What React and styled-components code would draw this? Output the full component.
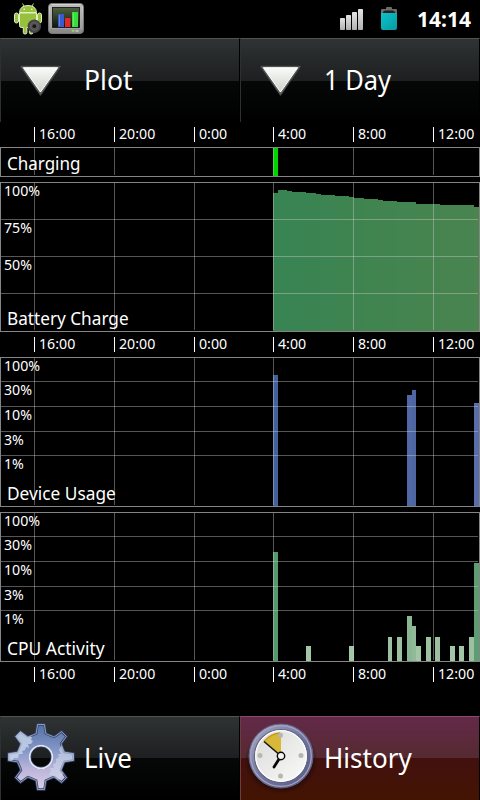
import React from 'react';
import styled, { createGlobalStyle, css } from 'styled-components';

const GlobalStyle = createGlobalStyle`
  body { margin: 0; background: #000; }
  * { box-sizing: border-box; }
`;

const Screen = styled.main`
  width: 480px;
  height: 800px;
  display: flex;
  flex-direction: column;
  overflow: hidden;
  background: #000;
  color: #fff;
  font-family: 'Noto Sans', 'Open Sans', sans-serif;
`;

const StatusBar = styled.header`
  height: 38px;
  flex: none;
  display: flex;
  align-items: flex-start;
  justify-content: space-between;
`;

const StatusGroup = styled.div`
  display: flex;
  height: 38px;
`;

const Clock = styled.span`
  width: 63px;
  padding-top: 5px;
  margin-left: 17px;
  font-size: 21px;
  font-weight: 700;
  line-height: 29px;
`;

const ButtonRow = styled.nav`
  display: grid;
  grid-template-columns: 240px 240px;
  height: 84px;
  flex: none;
`;

const plain = css`
  border-top: 1px solid #505354;
  border-left: 1px solid #2d2f30;
  background: linear-gradient(#2f3334 0, #1d1f20 50%, #060707 50%, #000 100%);
`;

const highlighted = css`
  border-top: 1px solid #8a4a68;
  border-left: 1px solid #74393f;
  background: linear-gradient(#632949 0, #552a30 50%, #42110f 50%, #431402 100%);
`;

const BarButton = styled.button`
  ${(p) => (p.$active ? highlighted : plain)}
  border-right: 1px solid #000;
  border-bottom: 0;
  border-radius: 0;
  padding: 0;
  display: flex;
  align-items: center;
  color: #fff;
  font: 400 27.5px/38px 'Noto Sans', 'Open Sans', sans-serif;
  text-align: left;
`;

const IconSlot = styled.span`
  width: 81px;
  height: 83px;
  flex: none;
  svg { display: block; }
`;

const ButtonText = styled.span`
  display: block;
  padding: 0 0 2px 2px;
  transform: scaleX(${(p) => p.$stretch || 1});
  transform-origin: 2px 50%;
`;

const Axis = styled.div`
  height: ${(p) => p.$height}px;
  flex: none;
  display: flex;
  padding: 5px 0 0 34px;
`;

const Tick = styled.span`
  width: ${(p) => p.$width}px;
  flex: none;
  height: 15px;
  border-left: 1px solid #fff;
  padding-left: 4px;
  font-size: 14.2px;
  line-height: 14px;
  white-space: nowrap;
`;

const Panel = styled.section`
  position: relative;
  width: 480px;
  height: ${(p) => p.$height}px;
  margin-bottom: ${(p) => p.$gap || 0}px;
  flex: none;
  svg { display: block; }
`;

const Scale = styled.span`
  position: absolute;
  left: 4px;
  top: ${(p) => p.$line}px;
  font-size: 14.2px;
  line-height: 18px;
`;

const Title = styled.h2`
  position: absolute;
  left: 7px;
  bottom: 2px;
  margin: 0;
  font-size: 18px;
  font-weight: 400;
  line-height: 24px;
  white-space: nowrap;
  transform: scaleX(${(p) => p.$stretch || 1});
  transform-origin: 0 50%;
`;

const Footer = styled.div`
  margin-top: auto;
`;

const columns = [34, 114, 194, 273, 353, 433];
const hours = ['16:00', '20:00', '0:00', '4:00', '8:00', '12:00'];

const battery = [
  [273, 11], [278, 8], [287, 9], [292, 10], [306, 11], [316, 12], [321, 13],
  [335, 14], [349, 15], [354, 16], [364, 17], [378, 18], [383, 19], [397, 20],
  [416, 22], [440, 23], [474, 25],
].map(([x, y], i, all) => ({
  x,
  y,
  w: (all[i + 1] ? all[i + 1][0] : 479) - x,
  c: `rgb(${Math.round(55 + (x - 273) * 0.1)},${132},${Math.round(82 - (x - 273) * 0.02)})`,
}));

const device = [
  { x: 273, y: 18, w: 5, c: '#43609a' },
  { x: 407, y: 38, w: 5, c: '#5069a5' },
  { x: 412, y: 33, w: 4, c: '#4e67a3' },
  { x: 474, y: 46, w: 5, c: '#586daa' },
];

const cpu = [
  { x: 273, y: 40, w: 5, c: '#55986c' },
  { x: 306, y: 134, w: 5, c: '#a3c7a6' },
  { x: 349, y: 134, w: 5, c: '#a3c7a6' },
  { x: 388, y: 125, w: 4, c: '#9bc1a1' },
  { x: 397, y: 125, w: 5, c: '#9bc1a1' },
  { x: 407, y: 104, w: 5, c: '#8bb694' },
  { x: 412, y: 114, w: 4, c: '#91bb98' },
  { x: 416, y: 134, w: 5, c: '#a3c7a6' },
  { x: 426, y: 125, w: 5, c: '#9bc1a1' },
  { x: 435, y: 125, w: 5, c: '#9bc1a1' },
  { x: 450, y: 134, w: 5, c: '#a3c7a6' },
  { x: 459, y: 134, w: 5, c: '#a3c7a6' },
  { x: 469, y: 125, w: 5, c: '#9bc1a1' },
  { x: 474, y: 51, w: 5, c: '#5c9e72' },
];

function Chart({ title, stretch, height, gap, rows = [], labels = [], bars }) {
  return (
    <Panel $height={height} $gap={gap}>
      <svg width="480" height={height} shapeRendering="crispEdges">
        {bars.map((b) => (
          <rect key={b.x} x={b.x} y={b.y} width={b.w} height={height - 1 - b.y} fill={b.c} />
        ))}
        <g fill="#ccc" fillOpacity=".42">
          {columns.map((x) => <rect key={x} x={x} y="1" width="1" height={height - 3} />)}
          {rows.map((y) => <rect key={y} x="1" y={y} width="477" height="1" />)}
        </g>
        <rect x=".5" y=".5" width="479" height={height - 1} fill="none" stroke="#858585" />
      </svg>
      {labels.map((text, i) => (
        <Scale key={text} $line={i === 0 ? 0 : rows[i - 1]}>{text}</Scale>
      ))}
      <Title $stretch={stretch}>{title}</Title>
    </Panel>
  );
}

function TimeAxis({ height = 25 }) {
  return (
    <Axis $height={height}>
      {hours.map((h, i) => (
        <Tick key={h} $width={(columns[i + 1] || 480) - columns[i]}>{h}</Tick>
      ))}
    </Axis>
  );
}

function Droid() {
  return (
    <svg width="96" height="38" viewBox="0 0 96 38">
      <defs>
        <linearGradient id="frame" x2="0" y2="1"><stop stopColor="#d5d5d5" /><stop offset="1" stopColor="#858585" /></linearGradient>
        <linearGradient id="tube" x2="0" y2="1"><stop stopColor="#50613f" /><stop offset="1" stopColor="#0c160a" /></linearGradient>
      </defs>
      <g fill="#97c03d" stroke="#e1efc4" strokeWidth="1">
        <path d="M22.5 3.5l2 3.5M33.5 3.5l-2 3.5" stroke="#b9d77b" />
        <rect x="14.5" y="13" width="4" height="10" rx="2" />
        <rect x="37.5" y="13" width="4" height="10" rx="2" />
        <path d="M19.5 13h17v12.5q0 2-2 2h-1.500v5q0 1.500-1.800 1.500t-1.800-1.500v-5h-2.500v5q0 1.500-1.800 1.500t-1.800-1.500v-5h-2q-1.800 0-1.800-2z" />
        <path d="M19.500 12.500q.5-7 8.500-7t8.500 7z" />
      </g>
      <circle cx="24.200" cy="9.300" r=".8" fill="#fff" /><circle cx="31.800" cy="9.300" r=".8" fill="#fff" />
      <circle cx="34.300" cy="26.200" r="6.700" fill="#454545" />
      <circle cx="34.300" cy="26.200" r="4.200" fill="#555" stroke="#666" strokeWidth=".7" />
      <circle cx="34.300" cy="26.200" r="1.900" fill="#161616" />
      <rect x="48.500" y="3.500" width="35" height="30" rx="3.500" fill="url(#frame)" stroke="#777" />
      <path d="M50 5h32v24H50z" fill="#aaa" opacity=".6" />
      <rect x="52.500" y="7.500" width="27" height="20" fill="url(#tube)" stroke="#222" />
      <rect x="58" y="14" width="6" height="13" fill="#365bd0" /><rect x="65" y="18" width="5.500" height="9" fill="#e02828" /><rect x="72" y="12" width="6" height="15" fill="#35df3b" />
      <path d="M59.500 15v11M73.500 13v13" stroke="#fff" strokeOpacity=".25" />
      <ellipse cx="73" cy="30.700" rx="1.500" ry="1" fill="#8fe53a" /><path d="M75.500 31h3" stroke="#e6e6e6" />
    </svg>
  );
}

function Signals() {
  return (
    <svg width="70" height="38" viewBox="0 0 70 38">
      <defs>
        <linearGradient id="sig" x2="0" y2="1"><stop stopColor="#e4e4e4" /><stop offset="1" stopColor="#b0b0b0" /></linearGradient>
        <linearGradient id="cell" x2="1" y2="1"><stop stopColor="#0cc4cc" /><stop offset="1" stopColor="#07999f" /></linearGradient>
      </defs>
      <g fill="url(#sig)">
        <rect x="10" y="18" width="5" height="12" rx=".8" /><rect x="16" y="15" width="5" height="15" rx=".8" />
        <rect x="22" y="12" width="5" height="18" rx=".8" /><rect x="28" y="9" width="5" height="21" rx=".8" />
      </g>
      <path d="M51 13V10q0-1 1-1h4V8q0-1 1-1h4q1 0 1 1v1h4q1 0 1 1v3z" fill="#6c6c6c" />
      <path d="M53 13v-1l2-1.500h8l2 1.500v1z" fill="#222" />
      <path d="M51 13h16v15q0 2-2 2H53q-2 0-2-2z" fill="url(#cell)" />
    </svg>
  );
}

function DownArrow({ id }) {
  return (
    <svg width="81" height="83" viewBox="1 39 81 83">
      <defs><linearGradient id={id} x2="0" y2="1"><stop stopColor="#fafbf9" /><stop offset="1" stopColor="#cfd2ca" /></linearGradient></defs>
      <path d="M21 66.500h39L40.500 95z" fill="#666" stroke="#555" strokeOpacity=".7" strokeWidth="1.500" strokeLinejoin="round" />
      <path d="M23.300 67.700h34.400L40.500 92z" fill={`url(#${id})`} stroke="#fff" strokeWidth="1" />
    </svg>
  );
}

function Gear() {
  const teeth = [0, 45, 90, 135, 180, 225, 270, 315];
  const rot = (x, y, a) => {
    const r = (a * Math.PI) / 180;
    return `${(x * Math.cos(r) - y * Math.sin(r)).toFixed(2)} ${(x * Math.sin(r) + y * Math.cos(r)).toFixed(2)}`;
  };
  const outline = teeth
    .map((a) => [[-7, -22.5], [-4.8, -23.5], [-3.400, -32.500], [3.400, -32.500], [4.800, -23.500], [7, -22.500]].map(([x, y]) => rot(x, y, a)).join('L'))
    .join('L');
  const d = `M${outline}Z M11 0A11 11 0 1 0 -11 0A11 11 0 1 0 11 0Z`;
  return (
    <svg width="81" height="83" viewBox="1 717 81 83">
      <defs>
        <linearGradient id="steel" x2="0" y2="1"><stop stopColor="#5272a6" /><stop offset=".45" stopColor="#8c9ccb" /><stop offset=".7" stopColor="#bdb6da" /><stop offset="1" stopColor="#ddcee5" /></linearGradient>
        <clipPath id="cog"><path d={d} clipRule="evenodd" /></clipPath>
      </defs>
      <g transform="translate(41 757)">
        <path d={d} fill="url(#steel)" fillRule="evenodd" stroke="#334269" strokeWidth="2.400" />
        <g clipPath="url(#cog)" fill="#cfd9eb" fillOpacity=".75">
          <path d="M-34-28h18l5 7 2 1-1 3 2 1-2 3h-3l1 4-3-1-1 3-3 1 1 3h-4l-1 4h-4l-2 3h-12z" />
          <path d="M20-11l4-2 3 6h10v16l-12 4-7 10-4-1-2-4h-4l2-4-1-3h4l-1-4 3-1v-4l3-2-1-3h3l-2-4z" fillOpacity=".6" />
        </g>
        <path d={d} fill="none" stroke="#b2c0dc" strokeWidth=".9" strokeOpacity=".8" />
        <circle r="11.500" fill="none" stroke="#e3e7f5" strokeWidth="1.600" />
      </g>
    </svg>
  );
}

function HistoryClock() {
  return (
    <svg width="81" height="83" viewBox="241 717 81 83">
      <defs>
        <linearGradient id="ring" x2="1" y2="1"><stop stopColor="#a9abc4" /><stop offset=".5" stopColor="#7275a0" /><stop offset="1" stopColor="#5a5b82" /></linearGradient>
        <linearGradient id="face" x2="1" y2="1"><stop stopColor="#d9d9d7" /><stop offset="1" stopColor="#fbfbfa" /></linearGradient>
        <radialGradient id="shade"><stop offset=".75" stopColor="#160508" stopOpacity=".7" /><stop offset="1" stopColor="#160508" stopOpacity="0" /></radialGradient>
      </defs>
      <ellipse cx="281" cy="761" rx="37" ry="33" fill="url(#shade)" />
      <circle cx="281" cy="756" r="32" fill="url(#ring)" stroke="#626484" strokeWidth="1" />
      <circle cx="281" cy="756" r="30.300" fill="none" stroke="#a3a6c4" strokeWidth="1.200" />
      <circle cx="281" cy="756" r="26.500" fill="url(#face)" stroke="#626283" strokeWidth="1.200" />
      <circle cx="281" cy="756" r="25.300" fill="none" stroke="#fff" strokeWidth="1.200" />
      <path d="M281 756L264 741.500Q271 733.500 281 733z" fill="#d7b838" />
      <path d="M264 741.500Q271 733.500 280 733" fill="none" stroke="#c09c16" strokeWidth="1.300" />
      <g fill="#b5b8b2"><circle cx="280.500" cy="735.300" r="2.500" /><circle cx="280.500" cy="776" r="2.500" /><circle cx="260" cy="755.500" r="2.500" /><circle cx="301" cy="755.500" r="2.500" /></g>
      <path d="M281 756L264 741.500" stroke="#111" strokeWidth="1.500" />
      <path d="M281 756L274 767" stroke="#050505" strokeWidth="2.800" strokeLinecap="round" />
      <circle cx="281" cy="756" r="3.700" fill="#f4f4f4" stroke="#050505" strokeWidth="1.400" />
    </svg>
  );
}

export default function App() {
  return (
    <Screen>
      <GlobalStyle />
      <StatusBar>
        <Droid />
        <StatusGroup>
          <Signals />
          <Clock>14:14</Clock>
        </StatusGroup>
      </StatusBar>
      <ButtonRow>
        <BarButton><IconSlot><DownArrow id="a1" /></IconSlot><ButtonText $stretch={0.965}>Plot</ButtonText></BarButton>
        <BarButton><IconSlot><DownArrow id="a2" /></IconSlot><ButtonText $stretch={0.925}>1 Day</ButtonText></BarButton>
      </ButtonRow>
      <TimeAxis />
      <Chart title="Charging" stretch={0.945} height={30} gap={5} bars={[{ x: 273, y: 1, w: 5, c: '#00d300' }]} />
      <Chart title="Battery Charge" stretch={0.955} height={150} rows={[37, 74, 111]} labels={['100%', '75%', '50%']} bars={battery} />
      <TimeAxis />
      <Chart title="Device Usage" stretch={0.96} height={150} gap={5} rows={[24, 49, 74, 98]} labels={['100%', '30%', '10%', '3%', '1%']} bars={device} />
      <Chart title="CPU Activity" stretch={0.968} height={150} rows={[24, 49, 74, 98]} labels={['100%', '30%', '10%', '3%', '1%']} bars={cpu} />
      <TimeAxis />
      <Footer>
        <ButtonRow>
          <BarButton><IconSlot><Gear /></IconSlot><ButtonText $stretch={0.94}>Live</ButtonText></BarButton>
          <BarButton $active><IconSlot><HistoryClock /></IconSlot><ButtonText $stretch={0.947}>History</ButtonText></BarButton>
        </ButtonRow>
      </Footer>
    </Screen>
  );
}
